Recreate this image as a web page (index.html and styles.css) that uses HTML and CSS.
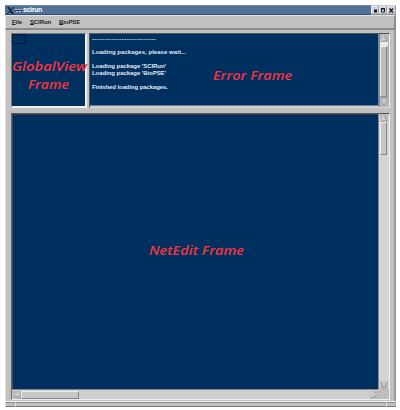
FILE: index.html
```html
<!DOCTYPE html>
<html lang="en">
<head>
<meta charset="utf-8">
<title>scirun</title>
<link rel="stylesheet" href="styles.css">
</head>
<body>
<div class="window">
  <header class="titlebar">
    <svg class="xlogo" width="16" height="9" viewBox="0 0 16 9"><path d="M0 1h2l5 7H5z" fill="#101b32"/><path d="M7 1L0 8" stroke="#101b32"/><path d="M8 3.5h7M9 5.5h6" stroke="#c5d0e2" stroke-dasharray="2 1"/><path d="M8 4.5h7" stroke="#26385c"/></svg>
    <span class="title">scirun</span>
    <svg class="controls" width="25" height="9" viewBox="0 0 25 9"><path d="M0 0h25v9H0z" fill="#d4d4d4"/><path d="M.5 9V.5H8M8.5 9V.5H16M16.5 9V.5H25" fill="none" stroke="#f0f0f0"/><path d="M7.5 0v9M15.5 0v9M24.5 0v9M0 8.5h25" stroke="#999"/><path d="M3 4h3v3H3z" fill="#111b42"/><path d="M10.5 3.5h3v3h-3z" fill="none" stroke="#111b42"/><path d="M10 3h4" stroke="#111b42"/><path d="M18.5 3l3.5 4M22 3l-3.5 4" stroke="#111b42" stroke-width="1.4"/></svg>
  </header>
  <nav class="menubar"><span><u>F</u>ile</span><span><u>S</u>CIRun</span><span><u>B</u>ioPSE</span></nav>
  <main class="content">
    <section class="top">
      <div class="global"><i class="viewport"></i>
        <svg class="label" width="78" height="32"><text x="0" y="13" textLength="75" lengthAdjust="spacingAndGlyphs">GlobalView</text><text x="16" y="31" textLength="41" lengthAdjust="spacingAndGlyphs">Frame</text></svg>
      </div>
      <div class="error">
        <div class="console">
          <svg class="log" width="110" height="70"><text x="1" y="6" textLength="64">--------------------------</text><text x="1" y="19" textLength="94">Loading packages, please wait...</text><text x="1" y="33" textLength="74">Loading package 'SCIRun'</text><text x="1" y="40" textLength="74">Loading package 'BioPSE'</text><text x="1" y="54" textLength="76">Finished loading packages.</text></svg>
          <svg class="label" width="84" height="20"><text x="1" y="15" textLength="79" lengthAdjust="spacingAndGlyphs">Error Frame</text></svg>
        </div>
        <div class="vbar"><svg class="arrow" viewBox="0 0 8 8"><path d="M4 1L1 7h6z"/><path class="hi" d="M4 1L1 7"/></svg><div class="trough"></div><div class="thumb first"></div><svg class="arrow" viewBox="0 0 8 8"><path d="M1 1h6L4 7z"/><path class="hi" d="M1 1h6"/></svg></div>
      </div>
    </section>
    <section class="net">
      <div class="canvas"><svg class="label" width="99" height="20"><text x="1" y="15" textLength="95" lengthAdjust="spacingAndGlyphs">NetEdit Frame</text></svg></div>
      <div class="vbar"><svg class="arrow" viewBox="0 0 8 8"><path d="M4 1L1 7h6z"/><path class="hi" d="M4 1L1 7"/></svg><div class="thumb second"></div><svg class="arrow" viewBox="0 0 8 8"><path d="M1 1h6L4 7z"/><path class="hi" d="M1 1h6"/></svg></div>
      <div class="hbar"><svg class="arrow" viewBox="0 0 8 8"><path d="M1 4l6-3v6z"/><path class="hi" d="M1 4l6-3"/></svg><div class="thumb wide"></div><svg class="arrow" viewBox="0 0 8 8"><path d="M7 4L1 1v6z"/><path class="hi" d="M1 7V1l6 3"/></svg></div>
      <div class="corner"></div>
    </section>
  </main>
  <footer class="frame-bottom"><i></i><i></i><i></i></footer>
</div>
</body>
</html>
```

FILE: styles.css
```css
* { box-sizing: border-box; }
body { margin: 0; background: #fff; font-family: "Liberation Sans", Arial, sans-serif; }
.window { width: 391px; height: 402px; margin: 5px 0 0 5px; background: #c1c1c1; display: flex; flex-direction: column; }
.titlebar { height: 10px; display: flex; align-items: center; background: #527199; border-top: 1px solid #7189aa; border-bottom: 1px solid #334e74; }
.xlogo { margin-left: 2px; flex: none; }
.title { flex: 1; color: #fff; font-size: 7px; line-height: 8px; font-weight: bold; letter-spacing: -.35px; }
.controls { flex: none; height: 10px; }
.menubar { height: 15px; display: flex; gap: 8px; padding: 2px 6px; border: 1px solid #e4e4e4; border-right: 2px solid #8d8d8d; border-bottom: 2px solid #898989; font-size: 6px; line-height: 8px; font-weight: bold; color: #222; letter-spacing: -.1px; }
.menubar u { text-decoration-thickness: 1px; text-underline-offset: 0; }
.content { height: 371px; padding: 3px 4px 0 5px; border-left: 1px solid #ddd; border-right: 2px solid #989898; }
.top { display: flex; gap: 2px; height: 75px; }
.global { width: 77px; background: #003060; border: 2px solid; border-color: #777 #f0f0f0 #f0f0f0 #777; position: relative; border-left-width: 1px; border-top-width: 1px; }
.viewport { display: block; width: 14px; height: 10px; border: 1px solid #001a3c; }
.label { display: block; overflow: visible; font: italic 600 13px "Open Sans", sans-serif; fill: #f6343e; }
.global .label { position: absolute; left: 0; top: 24px; }
.error { width: 301px; display: flex; border: 1px solid; border-color: #555 #eee #d6d6d6 #555; background: #c4c4c4; }
.console { width: 289px; height: 72px; background: #003060; display: flex; border-bottom: 1px solid #7489a4; border-right: 1px solid #7489a4; padding: 1px 0 0 1px; }
.log { display: block; font: bold 6px "Liberation Sans", sans-serif; fill: #e2e9f1; }
.console .label { margin: 30px 0 0 11px; }
.vbar { width: 10px; background: #b0b0b0; display: flex; flex-direction: column; border-left: 1px solid #888; }
.arrow { width: 8px; height: 8px; flex: none; fill: #d0d0d0; stroke: #858585; stroke-width: .7; background: #bababa; }
.hi { fill: none; stroke: #f4f4f4; }
.thumb { background: #c6c6c6; border: 1px solid; border-color: #eee #858585 #858585 #eee; }
.trough { height: 4px; width: 8px; background: #e9e9e9; }
.first { height: 51px; width: 7px; background: #bcbcbc; }
.vbar .arrow:last-child { margin-top: auto; }
.net { display: grid; grid-template: 275px 10px / 366px 11px; width: 379px; height: 287px; margin-top: 5px; border: 1px solid; border-color: #555 #f0f0f0 #eee #666; }
.canvas { background: #003060; padding: 125px 0 0 135px; border-top: 1px solid #333c48; border-left: 1px solid #384858; }
.net .vbar { width: auto; padding-left: 1px; background: #d5d5d5; }
.second { height: 33px; width: 7px; }
.hbar { display: flex; align-items: center; background: #cecece; border-top: 1px solid #898989; padding-left: 1px; }
.wide { width: 58px; height: 8px; }
.hbar .arrow:last-child { margin-left: auto; }
.corner { background: #bebebe; }
.frame-bottom { height: 6px; display: grid; grid-template-columns: 10px 1fr 10px; border-top: 1px solid #f2f2f2; }
.frame-bottom i { background: #c0c0c0; border: 1px solid; border-color: #888 #aaa #777 #e8e8e8; }
```
